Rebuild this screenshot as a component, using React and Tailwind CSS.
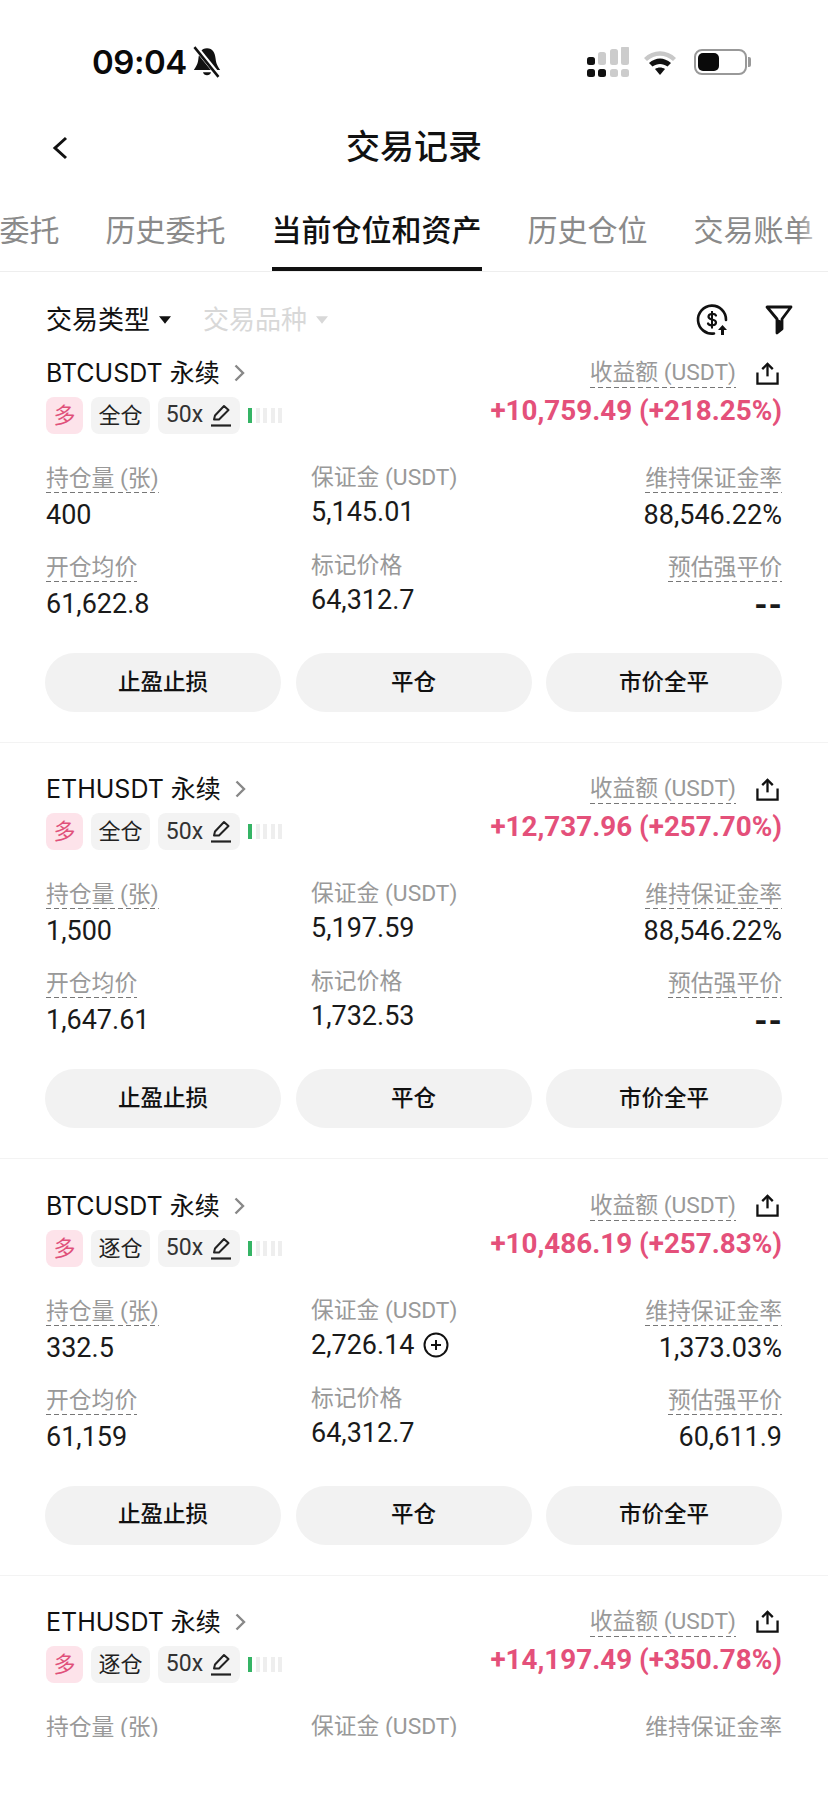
const labelDash =
  "bg-[repeating-linear-gradient(90deg,#777_0,#777_5px,transparent_5px,transparent_8px)] bg-bottom bg-no-repeat bg-[length:100%_1px]";

const positions = [
  {
    symbol: "BTCUSDT",
    mode: "全仓",
    pnl: "+10,759.49 (+218.25%)",
    size: "400",
    margin: "5,145.01",
    rate: "88,546.22%",
    entry: "61,622.8",
    mark: "64,312.7",
    liq: "--",
  },
  {
    symbol: "ETHUSDT",
    mode: "全仓",
    pnl: "+12,737.96 (+257.70%)",
    size: "1,500",
    margin: "5,197.59",
    rate: "88,546.22%",
    entry: "1,647.61",
    mark: "1,732.53",
    liq: "--",
  },
  {
    symbol: "BTCUSDT",
    mode: "逐仓",
    pnl: "+10,486.19 (+257.83%)",
    size: "332.5",
    margin: "2,726.14",
    addMargin: true,
    rate: "1,373.03%",
    entry: "61,159",
    mark: "64,312.7",
    liq: "60,611.9",
  },
  {
    symbol: "ETHUSDT",
    mode: "逐仓",
    pnl: "+14,197.49 (+350.78%)",
    size: "",
    margin: "",
    rate: "",
    entry: "",
    mark: "",
    liq: "",
  },
];

function StatusIcons() {
  return (
    <div className="flex items-center">
      <svg width="46" height="30" viewBox="0 0 46 30">
        <rect x="0" y="10" width="8" height="8" rx="2.5" fill="#111" />
        <rect x="0" y="22" width="8" height="8" rx="2.5" fill="#111" />
        <rect x="11" y="5" width="8" height="13" rx="2.5" fill="#ccc" />
        <rect x="11" y="22" width="8" height="8" rx="2.5" fill="#111" />
        <rect x="23" y="2" width="8" height="16" rx="2.5" fill="#ccc" />
        <rect x="23" y="22" width="8" height="8" rx="2.5" fill="#ccc" />
        <rect x="34" y="-1" width="8" height="19" rx="2.5" fill="#ccc" />
        <rect x="34" y="22" width="8" height="8" rx="2.5" fill="#ccc" />
      </svg>
      <svg className="ml-[9px]" width="36" height="28" viewBox="0 0 36 28">
        <path d="M2 10 C11 1 25 1 34 10 L31 13 C23 6 13 6 5 13Z" fill="#c8c8c8" />
        <path d="M7 15 C14 9 22 9 29 15 L25.5 18.5 C21 15 15 15 10.500 18.500Z" fill="#111" />
        <path d="M13 21 C16 19 20 19 23 21 L18 27Z" fill="#111" />
      </svg>
      <div className="ml-[16px] flex items-center">
        <div className="h-[26px] w-[53px] rounded-[8px] border-[2px] border-[#999] p-[2px]">
          <div className="h-full w-[21px] rounded-[5px] bg-[#0a0a0a]" />
        </div>
        <div className="ml-[1px] h-[10px] w-[3px] rounded-r-[2px] bg-[#999]" />
      </div>
    </div>
  );
}

function MutedBell() {
  return (
    <svg width="30" height="32" viewBox="0 0 26 28">
      <path d="M13 2 C8 2 6 6 5.500 11 C5 16 3.500 18 1.500 21 H24.500 C22.500 18 21 16 20.500 11 C20 6 18 2 13 2Z" fill="#111" />
      <path d="M9.500 23 C10 26.500 16 26.500 16.500 23Z" fill="#111" />
      <path d="M3 1 L24 27" stroke="#fff" strokeWidth="4.500" />
      <path d="M2 1 L23 27" stroke="#111" strokeWidth="2.200" />
    </svg>
  );
}

function CoinIcon() {
  return (
    <svg width="32" height="32" viewBox="0 0 32 32" fill="none">
      <path d="M18 29.500 A14 14 0 1 1 30 16" stroke="#111" strokeWidth="2.600" strokeLinecap="round" />
      <path d="M20 11.500 C19 9.500 12.500 9 12.500 12.800 C12.500 16.500 20 14.500 20 18.500 C20 22 13 22 12 19.500" stroke="#111" strokeWidth="2.200" strokeLinecap="round" />
      <path d="M16 7 V24.500" stroke="#111" strokeWidth="2" />
      <path d="M26.500 21 L31 26 H28 V31 H25 V26 H22Z" fill="#111" />
    </svg>
  );
}

function FunnelIcon() {
  return (
    <svg width="28" height="30" viewBox="0 0 28 30" fill="none">
      <path d="M2 2 H26 L17 14 V24 L12 28 V14Z" stroke="#111" strokeWidth="2.800" strokeLinejoin="round" />
      <path d="M12 14 V28 L17 24 V16Z" fill="#111" />
    </svg>
  );
}

function ShareIcon() {
  return (
    <svg width="23" height="23" viewBox="0 0 24 24" fill="none" stroke="#111" strokeWidth="2.400">
      <path d="M12 15 V2" />
      <path d="M6.500 7.500 L12 2 L17.500 7.500" />
      <path d="M1.500 11 V22.500 H22.500 V11" />
    </svg>
  );
}

function PencilIcon() {
  return (
    <svg width="22" height="25" viewBox="0 0 22 24" fill="none" stroke="#222" strokeWidth="2">
      <path d="M4 16 L5 12 L14 2.500 L18.500 6.500 L9 16 Z" strokeLinejoin="round" />
      <path d="M1 22 H21" strokeWidth="2.200" />
    </svg>
  );
}

function Chevron({ className }) {
  return (
    <svg className={className} width="11" height="18" viewBox="0 0 11 18" fill="none" stroke="#888" strokeWidth="2.400">
      <path d="M1.500 1.500 L9 9 L1.500 16.500" />
    </svg>
  );
}

function Caret({ color }) {
  return (
    <svg width="12" height="8" viewBox="0 0 11 7">
      <path d="M0 0 H11 L5.500 7Z" fill={color} />
    </svg>
  );
}

function PlusCircle() {
  return (
    <svg width="26" height="26" viewBox="0 0 26 26" fill="none" stroke="#111" strokeWidth="2">
      <circle cx="13" cy="13" r="11.500" />
      <path d="M8 13 H18 M13 8 V18" />
    </svg>
  );
}

function Tag({ className, children }) {
  return (
    <div className={`flex h-[37px] items-center justify-center rounded-[8px] text-[22px] ${className}`}>
      {children}
    </div>
  );
}

function Stat({ label, value, dashed, right, tight, children }) {
  const isEmpty = value === "--";
  return (
    <div className={`flex flex-col ${right ? "items-end" : "items-start"}`}>
      <div className={`h-[30px] text-[22.8px] leading-[31px] text-[#999] ${dashed ? labelDash : ""}`}>{label}</div>
      <div
        className={`flex h-[38px] items-center gap-[9px] leading-[38px] text-[#1a1a1a] ${tight ? "mt-[1px]" : "mt-[3px]"} ${
          isEmpty ? "-mr-[1px] text-[34px] font-bold tracking-[1px]" : "text-[27px]"
        }`}
      >
        {value}
        {children}
      </div>
    </div>
  );
}

function PositionCard({ p }) {
  return (
    <div className="flex h-[385px] shrink-0 flex-col border-b border-[#f3f3f3] px-[46px]">
      <div className="flex justify-between">
        <div className="flex flex-col gap-[9px]">
          <div className="flex h-[30px] items-center font-['Inter','Noto_Sans_CJK_SC',sans-serif] text-[25px] leading-[30px] text-[#111]">
            {p.symbol} 永续
            <Chevron className="ml-[14px]" />
          </div>
          <div className="flex items-center gap-[8px]">
            <Tag className="w-[37px] bg-[#fde3ea] text-[#e0507a]">多</Tag>
            <Tag className="w-[59px] bg-[#f3f3f3] text-[#222]">{p.mode}</Tag>
            <Tag className="w-[82px] gap-[7px] bg-[#f3f3f3] text-[23px] text-[#333]">
              50x
              <PencilIcon />
            </Tag>
            <div className="flex items-center gap-[3.500px]">
              <div className="h-[15px] w-[4px] bg-[#35b465]" />
              <div className="h-[15px] w-[4px] bg-[#eeeeee]" />
              <div className="h-[15px] w-[4px] bg-[#eeeeee]" />
              <div className="h-[15px] w-[4px] bg-[#eeeeee]" />
              <div className="h-[15px] w-[4px] bg-[#eeeeee]" />
            </div>
          </div>
        </div>
        <div className="flex flex-col items-end">
          <div className="mr-[3px] flex h-[30px] items-center gap-[20px]">
            <span className={`text-[22.8px] leading-[30px] text-[#999] ${labelDash}`}>收益额 (USDT)</span>
            <ShareIcon />
          </div>
          <div className="mt-[7px] text-[27.8px] leading-[32px] font-bold text-[#e4507a]">{p.pnl}</div>
        </div>
      </div>

      <div className="mt-[29px] flex justify-between">
        <div className="flex w-[265px] flex-col gap-[18px]">
          <Stat label="持仓量 (张)" value={p.size} dashed />
          <Stat label="开仓均价" value={p.entry} dashed />
        </div>
        <div className="-mt-[1px] flex flex-1 flex-col gap-[19px]">
          <Stat label="保证金 (USDT)" value={p.margin} tight>
            {p.addMargin && <PlusCircle />}
          </Stat>
          <Stat label="标记价格" value={p.mark} tight />
        </div>
        <div className="flex flex-col gap-[18px]">
          <Stat label="维持保证金率" value={p.rate} dashed right />
          <Stat label="预估强平价" value={p.liq} dashed right />
        </div>
      </div>

      <div className="mt-auto mb-[30px] -ml-[1px] flex justify-between">
        <button className="h-[59px] w-[236px] rounded-full bg-[#f2f2f2] text-[22.5px] font-medium text-[#111]">止盈止损</button>
        <button className="h-[59px] w-[236px] rounded-full bg-[#f2f2f2] text-[22.5px] font-medium text-[#111]">平仓</button>
        <button className="h-[59px] w-[236px] rounded-full bg-[#f2f2f2] text-[22.5px] font-medium text-[#111]">市价全平</button>
      </div>
    </div>
  );
}

export default function App() {
  return (
    <div className="h-[1800px] w-[828px] overflow-hidden bg-white font-['Roboto','Noto_Sans_CJK_SC',sans-serif]">
      <div className="flex h-[100px] items-center justify-between pt-[24px] pr-[77px] pl-[92px]">
        <div className="flex items-center gap-[5px]">
          <span className="font-['Inter'] text-[33px] leading-none font-semibold tracking-[-0.5px] text-[#0a0a0a]">09:04</span>
          <MutedBell />
        </div>
        <StatusIcons />
      </div>

      <div className="relative flex h-[94px] items-center justify-center pt-[1px]">
        <svg className="absolute top-[36px] left-[52px]" width="16" height="24" viewBox="0 0 16 24" fill="none" stroke="#111" strokeWidth="3">
          <path d="M14 2 L3 12 L14 22" />
        </svg>
        <h1 className="text-[34px] font-medium text-[#111]">交易记录</h1>
      </div>

      <div className="relative h-[78px] overflow-hidden border-b border-[#eeeeee]">
        <div className="-ml-[0.5px] flex gap-[46px] text-[30px] whitespace-nowrap text-[#8a8a8a]">
          <div className="pt-[14px]">委托</div>
          <div className="pt-[14px]">历史委托</div>
          <div className="h-[77px] border-b-[4px] border-[#111] pt-[14px] font-medium text-[#111]">当前仓位和资产</div>
          <div className="pt-[14px]">历史仓位</div>
          <div className="pt-[14px]">交易账单</div>
        </div>
        <div className="absolute top-0 right-0 h-full w-[30px] bg-gradient-to-r from-transparent to-white" />
      </div>

      <div className="flex h-[86px] items-start justify-between pt-[33px] pr-[35px] pl-[46px]">
        <div className="flex items-center">
          <span className="text-[26px] leading-[30px] text-[#111]">交易类型</span>
          <span className="ml-[9px]"><Caret color="#111" /></span>
          <span className="ml-[32px] text-[26px] leading-[30px] text-[#d8d8d8]">交易品种</span>
          <span className="ml-[9px]"><Caret color="#d8d8d8" /></span>
        </div>
        <div className="-mt-[1px] flex items-center gap-[37px]">
          <CoinIcon />
          <FunnelIcon />
        </div>
      </div>

      <div className="flex h-[1379px] flex-col gap-[31.25px] overflow-hidden">
        {positions.map((p, i) => (
          <PositionCard key={i} p={p} />
        ))}
      </div>
    </div>
  );
}
